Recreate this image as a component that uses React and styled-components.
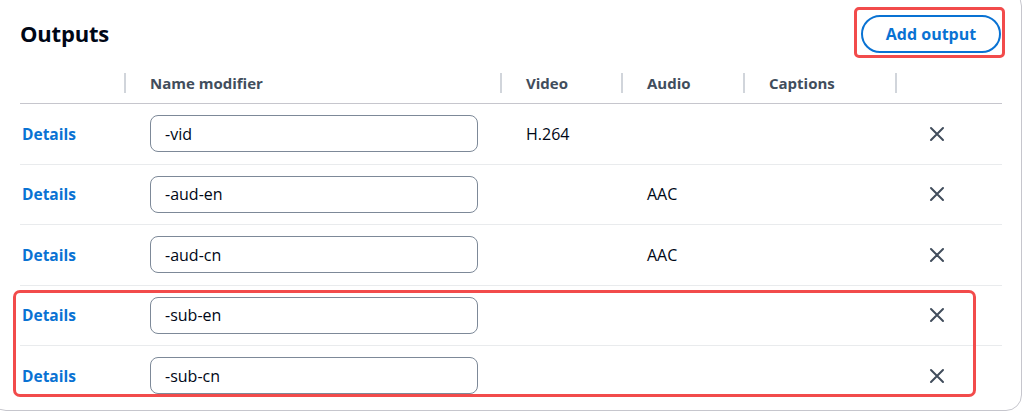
import React from 'react'
import styled, { createGlobalStyle } from 'styled-components'

const GlobalStyle = createGlobalStyle`
  html, body {
    margin: 0;
    padding: 0;
    background: #ffffff;
  }
  body {
    font-family: "Open Sans", "Noto Sans", Arial, sans-serif;
    color: #000716;
    overflow: hidden;
  }
`

const outputs = [
  { name: '-vid', video: 'H.264', audio: '', captions: '' },
  { name: '-aud-en', video: '', audio: 'AAC', captions: '' },
  { name: '-aud-cn', video: '', audio: 'AAC', captions: '' },
  { name: '-sub-en', video: '', audio: '', captions: '' },
  { name: '-sub-cn', video: '', audio: '', captions: '' },
]

const columns = '105px 376px 121px 122px 152px 106px'

const CloseIcon = () => (
  <svg width="16" height="16" viewBox="0 0 16 16" fill="none">
    <path d="M2 2l12 12M14 2L2 14" stroke="#414d5c" strokeWidth="2" strokeLinecap="round" />
  </svg>
)

const App = () => {
  const plain = outputs.slice(0, 3)
  const highlighted = outputs.slice(3)

  const renderRow = (o, last) => (
    <Row key={o.name} $last={last}>
      <DetailsCell><DetailsLink href="#">Details</DetailsLink></DetailsCell>
      <NameCell>
        <Input defaultValue={o.name} />
      </NameCell>
      <TextCell>{o.video}</TextCell>
      <TextCell>{o.audio}</TextCell>
      <TextCell>{o.captions}</TextCell>
      <ActionCell>
        <IconButton aria-label="Remove"><CloseIcon /></IconButton>
      </ActionCell>
    </Row>
  )

  return (
    <>
      <GlobalStyle />
      <Card>
        <Header>
          <Title>Outputs</Title>
          <ButtonHighlight>
            <AddButton>Add output</AddButton>
          </ButtonHighlight>
        </Header>

        <Table>
          <HeadRow>
            <HeadCell />
            <HeadCell>Name modifier</HeadCell>
            <HeadCell>Video</HeadCell>
            <HeadCell>Audio</HeadCell>
            <HeadCell>Captions</HeadCell>
            <HeadCell $noSep />
          </HeadRow>

          {plain.map((o) => renderRow(o, false))}

          <RowGroup>
            {highlighted.map((o, i) => renderRow(o, i === highlighted.length - 1))}
          </RowGroup>
        </Table>
      </Card>
    </>
  )
}

const Card = styled.div`
  box-sizing: border-box;
  margin: -10px 0 0 -10px;
  width: 1032px;
  height: 421px;
  border: 1px solid #c6c6cd;
  border-radius: 16px;
  padding: 16px 20px 0 29px;
  background: #fff;
`

const Header = styled.div`
  display: flex;
  justify-content: space-between;
  align-items: flex-start;
  height: 61px;
`

const Title = styled.h2`
  margin: 13px 0 0 0;
  font-size: 22px;
  line-height: 26px;
  font-weight: 700;
  letter-spacing: -0.2px;
  color: #000716;
`

const ButtonHighlight = styled.div`
  display: flex;
  margin-right: -4px;
  padding: 5px 1px 2px 4px;
  border: 3px solid #f24b4b;
  border-radius: 5px;
`

const AddButton = styled.button`
  box-sizing: border-box;
  width: 140px;
  height: 38px;
  border: 2px solid #0972d3;
  border-radius: 20px;
  background: #fff;
  color: #0972d3;
  font-family: inherit;
  font-size: 16px;
  font-weight: 700;
  cursor: pointer;
`

const Table = styled.div`
  width: 982px;
  display: flex;
  flex-direction: column;
`

const HeadRow = styled.div`
  box-sizing: border-box;
  display: grid;
  grid-template-columns: ${columns};
  height: 36px;
  padding-bottom: 6px;
  align-items: center;
  border-bottom: 1px solid #c6c6cd;
`

const HeadCell = styled.div`
  position: relative;
  padding-left: 25px;
  font-size: 15px;
  font-weight: 700;
  color: #414d5c;
  height: 20px;
  line-height: 20px;

  &::after {
    content: '';
    display: ${({ $noSep }) => ($noSep ? 'none' : 'block')};
    position: absolute;
    right: -1px;
    top: 0;
    width: 2px;
    height: 20px;
    background: #d1d5db;
  }
`

const RowGroup = styled.div`
  position: relative;

  &::after {
    content: '';
    position: absolute;
    left: -7px;
    right: 26px;
    top: 4px;
    bottom: 9px;
    border: 3px solid #f24b4b;
    border-radius: 7px;
    pointer-events: none;
  }
`

const Row = styled.div`
  display: grid;
  grid-template-columns: ${columns};
  height: 59.5px;
  align-items: center;
  border-bottom: ${({ $last }) => ($last ? 'none' : '1px solid #e9ebed')};
`

const DetailsCell = styled.div`
  padding-left: 2px;
`

const DetailsLink = styled.a`
  color: #0972d3;
  font-weight: 700;
  font-size: 15.5px;
  text-decoration: none;
`

const NameCell = styled.div`
  padding-left: 25px;
`

const Input = styled.input`
  box-sizing: border-box;
  width: 328px;
  height: 37px;
  border: 1px solid #7d8998;
  border-radius: 8px;
  padding: 0 14px;
  font-family: inherit;
  font-size: 16px;
  color: #000716;
  background: #fff;
  outline: none;
`

const TextCell = styled.div`
  padding-left: 25px;
  font-size: 16px;
  color: #000716;
`

const ActionCell = styled.div`
  padding-left: 33px;
  display: flex;
  align-items: center;
`

const IconButton = styled.button`
  border: none;
  background: none;
  padding: 0;
  display: flex;
  cursor: pointer;
`

export default App
